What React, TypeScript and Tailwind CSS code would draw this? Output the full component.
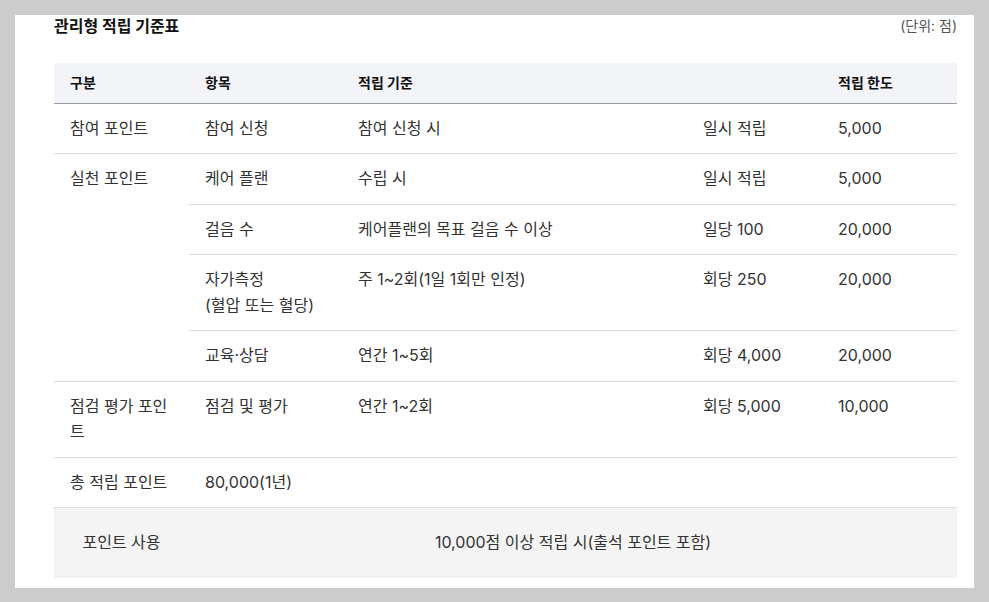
const rows = [
  { group: "참여 포인트", span: 1, item: ["참여 신청"], rule: "참여 신청 시", unit: "일시 적립", limit: "5,000" },
  { group: "실천 포인트", span: 4, item: ["케어 플랜"], rule: "수립 시", unit: "일시 적립", limit: "5,000" },
  { group: null, span: 0, item: ["걸음 수"], rule: "케어플랜의 목표 걸음 수 이상", unit: "일당 100", limit: "20,000" },
  { group: null, span: 0, item: ["자가측정", "(혈압 또는 혈당)"], rule: "주 1~2회(1일 1회만 인정)", unit: "회당 250", limit: "20,000" },
  { group: null, span: 0, item: ["교육·상담"], rule: "연간 1~5회", unit: "회당 4,000", limit: "20,000" },
  { group: "점검 평가 포인트", span: 1, item: ["점검 및 평가"], rule: "연간 1~2회", unit: "회당 5,000", limit: "10,000" },
]

const td = "align-top border-b border-[#dddddd] py-3 px-4"
const th = "h-10 border-b border-[#9d9dad] px-4 align-middle"

export default function App() {
  return (
    <div
      className="min-h-[602px] bg-[#cccccc] pt-[15px] pl-[15px] pr-[15px]"
      style={{ fontFamily: 'Inter, "Noto Sans CJK KR", sans-serif' }}
    >
      <div className="w-[959px] bg-white pl-[39px] pr-[17px] pb-[10px]">
        <div className="flex items-start justify-between">
          <h2 className="text-[16px] leading-[23px] font-bold text-[#111111]">관리형 적립 기준표</h2>
          <span className="text-[14px] leading-[20px] pt-[1px] text-[#555555]">(단위: 점)</span>
        </div>

        <table className="mt-[25px] w-[903px] table-fixed border-collapse text-[16px] leading-[25.5px] text-[#333333]">
          <colgroup>
            <col className="w-[135px]" />
            <col className="w-[153px]" />
            <col className="w-[345px]" />
            <col className="w-[135px]" />
            <col className="w-[135px]" />
          </colgroup>
          <thead>
            <tr className="bg-[#f2f4f8] text-left text-[14px] font-bold text-[#111111]">
              <th className={th}>구분</th>
              <th className={th}>항목</th>
              <th className={th}>적립 기준</th>
              <th className={th}></th>
              <th className={th}>적립 한도</th>
            </tr>
          </thead>
          <tbody>
            {rows.map((r, i) => (
              <tr key={i}>
                {r.group && (
                  <td rowSpan={r.span} className={td}>
                    {r.group}
                  </td>
                )}
                <td className={td}>
                  {r.item.map((line) => (
                    <div key={line}>{line}</div>
                  ))}
                </td>
                <td className={td}>{r.rule}</td>
                <td className={td}>{r.unit}</td>
                <td className={td}>{r.limit}</td>
              </tr>
            ))}
            <tr>
              <td className={td}>총 적립 포인트</td>
              <td colSpan={4} className={td}>
                80,000(1년)
              </td>
            </tr>
            <tr className="bg-[#f4f4f4]">
              <td className="py-[22px] text-center">포인트 사용</td>
              <td colSpan={4} className="py-[22px] text-center">
                10,000점 이상 적립 시(출석 포인트 포함)
              </td>
            </tr>
          </tbody>
        </table>
      </div>
    </div>
  )
}
